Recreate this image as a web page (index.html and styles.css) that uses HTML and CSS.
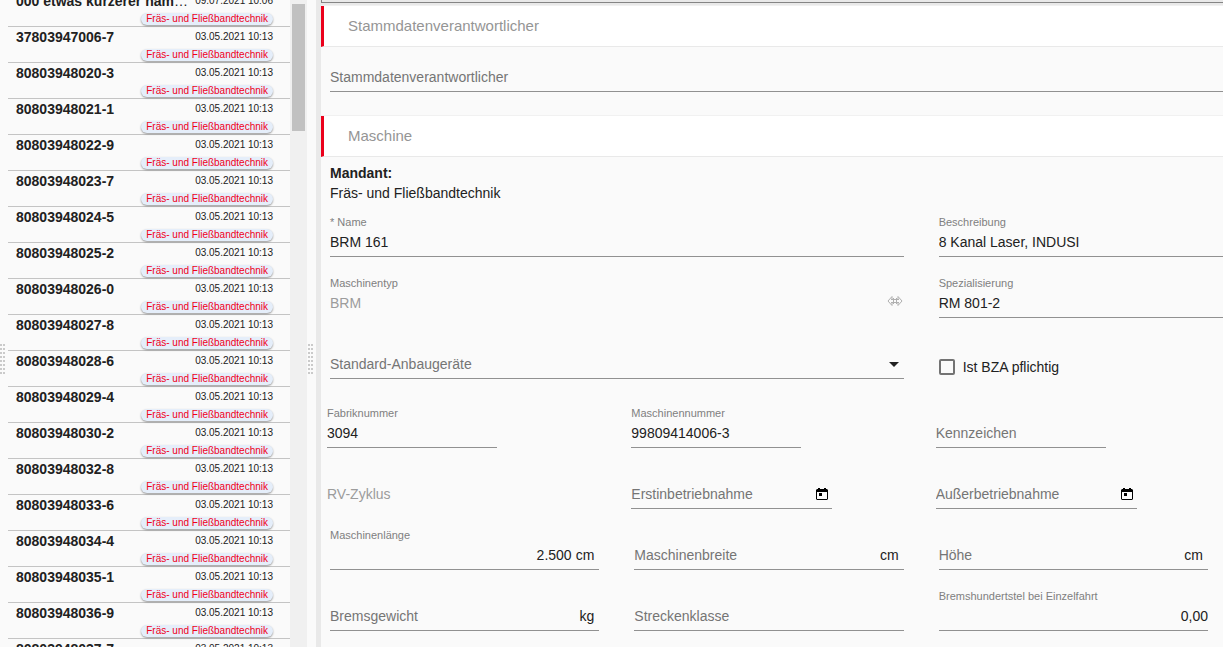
FILE: index.html
```html
<!DOCTYPE html>
<html lang="de">
<head>
    <meta charset="UTF-8">
    <meta name="viewport" content="width=device-width, initial-scale=1.0">
    <title>Maschine</title>
    <link rel="stylesheet" href="styles.css">
</head>
<body>
    <div class="layout">
        <div class="splitter splitter-left"><span class="grip"></span></div>

        <aside class="sidebar">
            <ul class="machine-list" id="machine-list">
                <!-- Filled by the script below -->
            </ul>
            <div class="scrollbar"><div class="scrollbar-thumb"></div></div>
        </aside>

        <div class="splitter"><span class="grip"></span></div>

        <main class="detail">
            <div class="detail-top"></div>

            <h2 class="section-title">Stammdatenverantwortlicher</h2>
            <div class="section owner">
                <div class="field">
                    <div class="line"><input type="text" aria-label="Stammdatenverantwortlicher" placeholder="Stammdatenverantwortlicher"></div>
                </div>
            </div>

            <h2 class="section-title">Maschine</h2>
            <div class="section">
                <p class="client"><b>Mandant:</b><br>Fräs- und Fließbandtechnik</p>

                <div class="grid">
                    <div class="field wide">
                        <label for="name">* Name</label>
                        <div class="line"><input type="text" id="name" value="BRM 161"></div>
                    </div>
                    <div class="field wide">
                        <label for="description">Beschreibung</label>
                        <div class="line"><input type="text" id="description" value="8 Kanal Laser, INDUSI"></div>
                    </div>

                    <div class="field wide">
                        <label for="type">Maschinentyp</label>
                        <div class="line no-line">
                            <input type="text" id="type" value="BRM" disabled>
                            <svg class="link-icon" viewBox="0 0 16 16" width="16" height="16">
                                <path d="M5 1.500 1 6l4 4.500M11 1.500 15 6l-4 4.500M5 1.500V4M5 8v2.500M11 1.500V4M11 8v2.500M4 4.500h8M4 7.500h8M6.500 3v6M9.500 3v6"/>
                            </svg>
                        </div>
                    </div>
                    <div class="field wide">
                        <label for="special">Spezialisierung</label>
                        <div class="line"><input type="text" id="special" value="RM 801-2"></div>
                    </div>

                    <div class="field wide">
                        <div class="line has-arrow">
                            <select aria-label="Standard-Anbaugeräte">
                                <option>Standard-Anbaugeräte</option>
                            </select>
                        </div>
                    </div>
                    <div class="check wide">
                        <input type="checkbox" id="bza">
                        <label for="bza">Ist BZA pflichtig</label>
                    </div>
                </div>

                <div class="grid numbers">
                    <div class="field short">
                        <label for="serial">Fabriknummer</label>
                        <div class="line"><input type="text" id="serial" value="3094"></div>
                    </div>
                    <div class="field short">
                        <label for="machine-no">Maschinennummer</label>
                        <div class="line"><input type="text" id="machine-no" value="99809414006-3"></div>
                    </div>
                    <div class="field short">
                        <div class="line"><input type="text" aria-label="Kennzeichen" placeholder="Kennzeichen"></div>
                    </div>

                    <div class="field short first">
                        <div class="line no-line"><input type="text" aria-label="RV-Zyklus" placeholder="RV-Zyklus" disabled></div>
                    </div>
                    <div class="field date">
                        <div class="line">
                            <input type="text" aria-label="Erstinbetriebnahme" placeholder="Erstinbetriebnahme">
                            <button type="button" class="date-button" aria-label="Kalender öffnen">
                                <svg viewBox="0 0 14 14" width="14" height="14"><path fill-rule="evenodd" d="M3 1h2v1h4V1h2v1h1l1 1v9l-1 1H2l-1-1V3l1-1h1zM2 5v7h10V5zM4 6h3v3H4z"/></svg>
                            </button>
                        </div>
                    </div>
                    <div class="field date">
                        <div class="line">
                            <input type="text" aria-label="Außerbetriebnahme" placeholder="Außerbetriebnahme">
                            <button type="button" class="date-button" aria-label="Kalender öffnen">
                                <svg viewBox="0 0 14 14" width="14" height="14"><path fill-rule="evenodd" d="M3 1h2v1h4V1h2v1h1l1 1v9l-1 1H2l-1-1V3l1-1h1zM2 5v7h10V5zM4 6h3v3H4z"/></svg>
                            </button>
                        </div>
                    </div>
                </div>

                <div class="grid">
                    <div class="field first">
                        <label for="length">Maschinenlänge</label>
                        <div class="line"><input type="text" class="number" id="length" value="2.500"><span class="unit">cm</span></div>
                    </div>
                    <div class="field">
                        <div class="line"><input type="text" aria-label="Maschinenbreite" placeholder="Maschinenbreite"><span class="unit">cm</span></div>
                    </div>
                    <div class="field">
                        <div class="line"><input type="text" aria-label="Höhe" placeholder="Höhe"><span class="unit">cm</span></div>
                    </div>

                    <div class="field first">
                        <div class="line"><input type="text" aria-label="Bremsgewicht" placeholder="Bremsgewicht"><span class="unit">kg</span></div>
                    </div>
                    <div class="field">
                        <div class="line"><input type="text" aria-label="Streckenklasse" placeholder="Streckenklasse"></div>
                    </div>
                    <div class="field">
                        <label for="brake">Bremshundertstel bei Einzelfahrt</label>
                        <div class="line"><input type="text" class="number" id="brake" value="0,00"></div>
                    </div>
                </div>
            </div>
        </main>
    </div>

    <script>
        const machineList = document.getElementById('machine-list');

        const machines = [
            '37803947006-7', '80803948020-3', '80803948021-1', '80803948022-9',
            '80803948023-7', '80803948024-5', '80803948025-2', '80803948026-0',
            '80803948027-8', '80803948028-6', '80803948029-4', '80803948030-2',
            '80803948032-8', '80803948033-6', '80803948034-4', '80803948035-1',
            '80803948036-9', '80803948037-7'
        ];

        function addMachine(name, date) {
            const item = document.createElement('li');
            item.className = 'machine';
            item.innerHTML = `
                <div class="machine-name"><b>${name}</b></div>
                <div class="machine-date">${date}</div>
                <div class="machine-tag">Fräs- und Fließbandtechnik</div>`;
            machineList.appendChild(item);
        }

        addMachine('000 etwas kürzerer nam</b>…<b>', '09.07.2021 10:06');
        machines.forEach(name => addMachine(name, '03.05.2021 10:13'));
    </script>
</body>
</html>
```
FILE: styles.css
```css
* {
    box-sizing: border-box;
}

body {
    margin: 0;
    font-family: "Liberation Sans", Arial, sans-serif;
    font-size: 14px;
    line-height: 20px;
    color: #212121;
    background-color: #fafafa;
}

.layout {
    display: flex;
    height: 100vh;
    overflow: hidden;
}

/* Splitters */
.splitter {
    flex: none;
    width: 9px;
    padding-left: 1px;
    padding-top: 70px;
    display: flex;
    align-items: center;
}

.splitter-left {
    width: 8px;
    padding-left: 0;
}

.grip {
    width: 5px;
    height: 30px;
    background-image: linear-gradient(90deg, transparent 2px, #fafafa 2px), linear-gradient(#cacaca 2px, transparent 2px);
    background-size: 3px 4px;
}

/* Machine list */
.sidebar {
    flex: none;
    width: 299px;
    display: flex;
    overflow: hidden;
}

.machine-list {
    flex: 1;
    list-style: none;
    margin: -9px 0 0; /* list is scrolled down a little */
    padding: 0;
}

.machine {
    display: grid;
    grid-template-columns: 172px auto;
    grid-template-rows: 16px 12px;
    row-gap: 4px;
    justify-content: space-between;
    height: 36px;
    padding: 2px 17px 0 8px;
    border-bottom: 1px solid #c4c4c4;
}

.machine-name {
    line-height: 16px;
    overflow: hidden;
    white-space: nowrap;
    text-overflow: ellipsis;
}

.machine-date {
    font-size: 10px;
    line-height: 16px;
}

.machine-tag {
    grid-column: 1 / 3;
    justify-self: end;
    padding: 0 5px;
    border-radius: 6px;
    font-size: 10px;
    line-height: 12px;
    color: #f0001a;
    background-color: #e5eefa;
    box-shadow: 0 1px 2px rgba(0, 0, 0, 0.4);
}

.scrollbar {
    flex: none;
    width: 17px;
    padding: 4px 2px;
    background-color: #f0f0f0;
}

.scrollbar-thumb {
    height: 127px;
    background-color: #c1c1c1;
}

/* Detail pane */
.detail {
    flex: 1;
    min-width: 0;
    overflow: hidden;
    border-left: 5px solid #e9e9e9;
}

.detail-top {
    height: 6px;
    background-color: #e9e9e9;
}

.detail-top::before {
    content: "";
    display: block;
    height: 2px;
    border: solid #858585;
    border-width: 0 0 1px 1px;
}

.section-title {
    margin: 0;
    padding: 10px 24px;
    border-left: 3px solid #eb001b;
    border-bottom: 1px solid #e9e9e9;
    box-shadow: 0 -1px 0 #f1f1f1;
    background-color: #fff;
    font-size: 15px;
    font-weight: normal;
    color: #959595;
}

.section {
    padding-left: 9px;
}

.owner {
    padding-top: 2px;
    padding-bottom: 24px;
}

.client {
    margin: 0;
    padding: 6px 0 11px;
}

/* The form is wider than the pane, the fourth column is cut off */
.grid {
    display: grid;
    grid-template-columns: repeat(4, 1fr);
    gap: 18px 35px;
    width: 132.4%;
    margin-bottom: 18px;
}

.wide {
    grid-column: span 2;
}

.first {
    grid-column: 1;
}

.numbers {
    margin-top: 26px;
    margin-left: -3px;
}

.field {
    display: flex;
    flex-direction: column;
    justify-content: flex-end;
    gap: 2px;
    min-height: 43px;
}

.short {
    width: 170px;
}

.date {
    width: 201px;
}

.field label {
    font-size: 11px;
    line-height: 16px;
    color: #808080;
}

.line {
    display: flex;
    align-items: center;
    padding-bottom: 4px;
    border-bottom: 1px solid #919191;
}

.no-line {
    border-color: transparent;
}

.line input,
.line select {
    flex: 1;
    min-width: 0;
    height: 20px;
    margin: 0;
    padding: 0;
    border: none;
    outline: none;
    background: none;
    font: inherit;
    color: inherit;
}

.line input::placeholder,
.line select {
    color: #757575;
    opacity: 1;
}

.line input:disabled,
.line input:disabled::placeholder {
    color: #9c9c9c;
}

.line select {
    appearance: none;
}

.line .number {
    text-align: right;
}

.unit {
    padding: 0 5px 0 4px;
}

.has-arrow {
    padding-right: 5px;
}

.has-arrow::after {
    content: "";
    border: 5px solid transparent;
    border-top-color: #212121;
    border-bottom: none;
}

.link-icon {
    fill: none;
    stroke: #b0b0b0;
    margin-right: 1px;
}

.date-button {
    display: flex;
    padding: 0 3px;
    border: none;
    background: none;
    cursor: pointer;
}

.check {
    display: flex;
    align-items: center;
    align-self: end;
    gap: 8px;
    height: 24px;
}

.check input {
    appearance: none;
    width: 16px;
    height: 16px;
    margin: 0;
    border: 2px solid #737373;
    border-radius: 2px;
}
```
